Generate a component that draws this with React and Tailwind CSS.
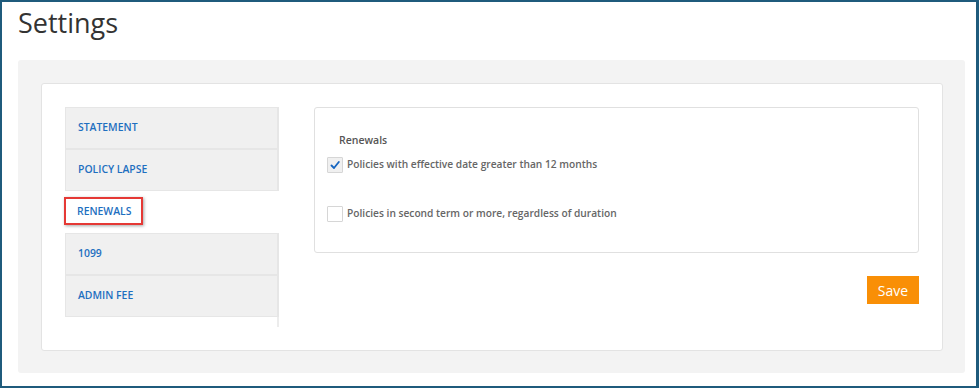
import { useState } from "react";

const tabs = ["STATEMENT", "POLICY LAPSE", "RENEWALS", "1099", "ADMIN FEE"];

function Check({ checked, onClick }) {
  return (
    <button
      onClick={onClick}
      className={`w-[16px] h-[16px] shrink-0 border border-[#d6d6d6] flex items-center justify-center rounded-[1px] ${checked ? "bg-[#f0f0f0]" : "bg-white"}`}
    >
      {checked && (
        <svg width="10" height="10" viewBox="0 0 10 10">
          <path d="M1.5 5.5 L4 8 L8.8 2" fill="none" stroke="#1565c0" strokeWidth="1.8" strokeLinecap="round" strokeLinejoin="round" />
        </svg>
      )}
    </button>
  );
}

export default function App() {
  const [tab, setTab] = useState("RENEWALS");
  const [a, setA] = useState(true);
  const [b, setB] = useState(false);

  return (
    <div className="w-[979px] h-[388px] bg-white border-[#1f5b7c] border-t-2 border-l-2 border-b-2 border-r-[3px] overflow-hidden" style={{ fontFamily: "'Open Sans', sans-serif" }}>
      <h1 className="pl-[16px] pt-[3px] h-[58px] text-[27px] leading-[36px] text-[#333]">Settings</h1>

      <div className="ml-[16px] mr-[11px] bg-[#f3f3f3] rounded-[3px] p-[23px] pr-[22px] pb-[22px]">
        <div className="bg-white border border-[#e3e3e3] rounded-[3px] h-[268px] pl-[23px] pt-[23px] pr-[23px] flex gap-[35px]">
          {/* sidebar */}
          <div className="w-[214px] shrink-0">
            {tabs.map(t => (
              <div
                key={t}
                onClick={() => setTab(t)}
                className={`h-[42px] flex items-center pl-[12px] text-[10.4px] font-semibold text-[#1e6fc0] cursor-pointer ${tab === t ? "bg-white" : "bg-[#f0f0f0] border border-[#e6e6e6] border-r-2"}`}
              >
                {tab === t ? (
                  <span className="relative">
                    RENEWALS
                    <span className="absolute -left-[13px] -top-[7px] w-[79px] h-[28px] border-2 border-[#e53935] shadow-[1px_1px_3px_rgba(0,0,0,0.35)]" />
                  </span>
                ) : t}
              </div>
            ))}
            <div className="h-[10px] border-r-2 border-[#ececec]" />
          </div>

          {/* content */}
          <div className="flex-1 flex flex-col items-end">
            <div className="w-full h-[146px] border border-[#e0e0e0] rounded-[3px] pl-[12px] pt-[24px]">
              <div className="pl-[12px] text-[10.5px] font-semibold text-[#555] leading-[16px]">Renewals</div>
              <div className="mt-[9px] flex items-center gap-[4px] text-[10.2px] font-semibold text-[#666]">
                <Check checked={a} onClick={() => setA(!a)} />
                <span>Policies with effective date greater than 12 months</span>
              </div>
              <div className="mt-[33px] flex items-center gap-[4px] text-[10.2px] font-semibold text-[#666]">
                <Check checked={b} onClick={() => setB(!b)} />
                <span>Policies in second term or more, regardless of duration</span>
              </div>
            </div>
            <button className="mt-[23px] w-[52px] h-[28px] bg-[#f98f06] text-white text-[14px]">Save</button>
          </div>
        </div>
      </div>
    </div>
  );
}
